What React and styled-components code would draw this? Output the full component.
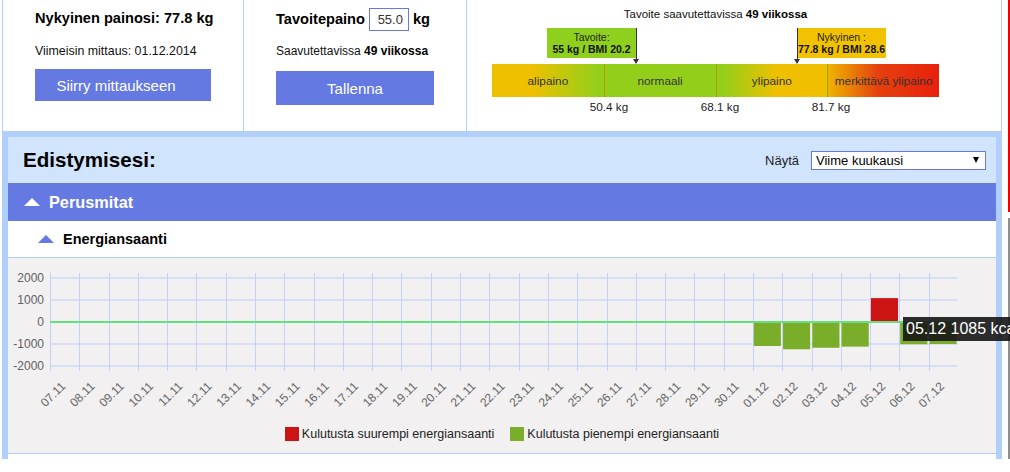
import React from "react";
import styled, { createGlobalStyle } from "styled-components";

const BLUE = "#6479e1";
const LINE = "#b0d0fb";

const GlobalStyle = createGlobalStyle`
  html, body { margin: 0; padding: 0; background: #fff; overflow: hidden; }
  body { font-family: "Liberation Sans", Arial, sans-serif; color: #000; }
  * { box-sizing: border-box; }
`;

const Page = styled.div`
  display: flex;
  align-items: flex-start;
  gap: 6px;
  padding-left: 2px;
  width: 1010px;
  height: 472px;
`;

const Main = styled.div`
  width: 1000px;
  display: flex;
  flex-direction: column;
`;

const Strip = styled.div`
  width: 2px;
  display: flex;
  flex-direction: column;
  gap: 6px;
`;

const StripPart = styled.div`
  height: ${(p) => p.$h}px;
  background: ${(p) => p.$c};
`;

/* ---------- top panels ---------- */
const TopRow = styled.div`
  display: flex;
  height: 131px;
  border-left: 1px solid ${LINE};
`;

const Panel = styled.section`
  width: ${(p) => p.$w}px;
  border-right: 1px solid ${LINE};
  padding: ${(p) => p.$pt}px 0 0 ${(p) => p.$pl}px;
  display: flex;
  flex-direction: column;
  align-items: flex-start;
`;

const BigTitle = styled.div`
  font-size: 14.6px;
  font-weight: bold;
  line-height: 17px;
`;

const Small = styled.div`
  font-size: ${(p) => p.$fs}px;
  line-height: 15px;
  color: #111;
  margin-top: ${(p) => p.$mt || 0}px;
  b { font-weight: bold; color: #000; }
`;

const Button = styled.button`
  width: ${(p) => p.$w}px;
  height: ${(p) => p.$h}px;
  margin-top: ${(p) => p.$mt}px;
  padding: 0 ${(p) => p.$pr || 0}px 0 0;
  background: ${BLUE};
  border: none;
  color: #fff;
  font-family: "Liberation Sans", Arial, sans-serif;
  font-size: 15px;
  cursor: pointer;
`;

const GoalRow = styled.div`
  display: flex;
  align-items: center;
  gap: 4px;
  height: 23px;
`;

const GoalInput = styled.input`
  width: 40px;
  height: 23px;
  border: 1px solid ${BLUE};
  text-align: right;
  padding: 0 5px 0 0;
  font-family: "Liberation Sans", Arial, sans-serif;
  font-size: 13px;
  color: #333;
  outline: none;
`;

const ScaleWrap = styled.div`
  width: 447px;
  display: flex;
  flex-direction: column;
`;

const ScaleTitle = styled.div`
  font-size: 11.5px;
  line-height: 15px;
  text-align: center;
  color: #111;
  b { color: #000; }
`;

const MarkerZone = styled.div`
  position: relative;
  height: 42px;
`;

const MarkerBox = styled.div`
  position: absolute;
  top: 6px;
  left: ${(p) => p.$left}px;
  width: 89px;
  height: 30px;
  background: ${(p) => p.$bg};
  display: flex;
  flex-direction: column;
  align-items: center;
  justify-content: center;
  font-size: 10.5px;
  line-height: 12px;
  color: #222;
  white-space: nowrap;
  b { color: #111; }
`;

const Pointer = styled.div`
  position: absolute;
  top: 6px;
  left: ${(p) => p.$x - 3}px;
  width: 7px;
  height: 36px;
  &::before {
    content: "";
    position: absolute;
    left: 3px;
    top: 0;
    bottom: 4px;
    width: 1px;
    background: #333;
  }
  &::after {
    content: "";
    position: absolute;
    left: 0;
    bottom: 0;
    border-left: 3.5px solid transparent;
    border-right: 3.5px solid transparent;
    border-top: 5px solid #333;
  }
`;

const Scale = styled.div`
  display: grid;
  grid-template-columns: repeat(4, 1fr);
  height: 33px;
`;

const Zone = styled.div`
  display: flex;
  align-items: center;
  justify-content: center;
  font-size: 11.8px;
  color: #333;
  background: ${(p) => p.$bg};
  & + & { border-left: 1px solid #a89f00; }
`;

const ScaleLabels = styled.div`
  position: relative;
  height: 20px;
  margin-top: 3px;
`;

const ScaleLabel = styled.span`
  position: absolute;
  top: 0;
  left: ${(p) => p.$x}px;
  transform: translateX(-50%);
  font-size: 11.7px;
  line-height: 14px;
  color: #222;
  white-space: nowrap;
`;

/* ---------- lower section ---------- */
const Lower = styled.div`
  background: ${LINE};
  padding: 6px 6px 0;
  height: 328px;
  display: flex;
  flex-direction: column;
`;

const Header = styled.div`
  height: 46px;
  background: #d0e4fd;
  display: flex;
  align-items: center;
  justify-content: space-between;
  padding: 0 10px 0 15px;
`;

const HeaderTitle = styled.h2`
  margin: 0;
  font-size: 20.6px;
  font-weight: bold;
  color: #000;
`;

const ShowWrap = styled.div`
  display: flex;
  align-items: center;
  gap: 12px;
  font-size: 13px;
  color: #222;
`;

const Select = styled.div`
  width: 175px;
  height: 19px;
  border: 1px solid ${BLUE};
  background: #fff;
  display: flex;
  align-items: center;
  justify-content: space-between;
  padding: 0 6px 0 4px;
  font-size: 13px;
  color: #000;
  &::after {
    content: "";
    border-left: 3.5px solid transparent;
    border-right: 3.5px solid transparent;
    border-top: 6px solid #000;
  }
`;

const SectionBar = styled.div`
  height: ${(p) => p.$h}px;
  background: ${(p) => (p.$main ? BLUE : "#fff")};
  display: flex;
  align-items: center;
  gap: 9px;
  padding-left: ${(p) => p.$pl}px;
  font-weight: bold;
  font-size: ${(p) => (p.$main ? 16.3 : 14.5)}px;
  color: ${(p) => (p.$main ? "#fff" : "#000")};
  border-bottom: ${(p) => (p.$main ? "none" : `1px solid ${LINE}`)};
`;

const UpTriangle = styled.span`
  width: 0;
  height: 0;
  border-left: 8px solid transparent;
  border-right: 8px solid transparent;
  border-bottom: 8px solid ${(p) => p.$c};
`;

const ChartArea = styled.div`
  position: relative;
  height: 196px;
  background: #f2f0f1;
  border-bottom: 1px solid ${LINE};
  display: flex;
  flex-direction: column;
`;

const Filler = styled.div`
  height: 5px;
  background: #fff;
`;

const Legend = styled.div`
  height: 24px;
  display: flex;
  align-items: center;
  justify-content: center;
  gap: 16px;
`;

const LegendItem = styled.div`
  display: flex;
  align-items: center;
  gap: 3px;
  font-size: 12.5px;
  color: #222;
  &::before {
    content: "";
    width: 14px;
    height: 14px;
    background: ${(p) => p.$c};
  }
`;

const Tooltip = styled.div`
  position: absolute;
  left: 895px;
  top: 59px;
  width: 140px;
  height: 24px;
  line-height: 24px;
  padding-left: 3px;
  background: rgba(22, 22, 22, 0.9);
  color: #fff;
  font-size: 16px;
  white-space: nowrap;
  z-index: 10;
`;

/* ---------- data ---------- */
const dates = [
  ...Array.from({ length: 24 }, (_, i) => `${String(i + 7).padStart(2, "0")}.11`),
  ...Array.from({ length: 7 }, (_, i) => `0${i + 1}.12`),
];
const values = { 24: -1090, 25: -1240, 26: -1170, 27: -1120, 28: 1085, 29: -1010, 30: -1000 };

const X0 = 42;
const X1 = 950;
const W = (X1 - X0) / 31;
const ZERO = 64;
const K = 0.022;

function Chart() {
  return (
    <svg width="988" height="164" style={{ display: "block" }}>
      {[20, 42, 64, 86, 108].map((y) => (
        <line key={y} x1={X0} x2={X1} y1={y} y2={y} stroke="#d6def8" strokeWidth="2" />
      ))}
      {dates.map((d, i) => {
        const x = Math.round(X0 + i * W) + 0.5;
        return <line key={d} x1={x} x2={x} y1={15} y2={113} stroke="#c6d1fb" strokeWidth="1" />;
      })}
      {Object.entries(values).map(([i, v]) => {
        const x = X0 + Number(i) * W + 0.8;
        const h = Math.abs(v) * K;
        return (
          <rect
            key={i}
            x={x}
            y={v > 0 ? ZERO - h : ZERO}
            width={W - 2.2}
            height={h}
            fill={v > 0 ? "#cc1414" : "#7aad29"}
          />
        );
      })}
      <line x1={X0} x2={X1} y1={ZERO} y2={ZERO} stroke="#66e07f" strokeWidth="2" />
      {[2000, 1000, 0, -1000, -2000].map((v, k) => (
        <text
          key={v}
          x={36}
          y={24 + k * 22}
          textAnchor="end"
          fontSize="12"
          fill="#606060"
          fontFamily="Liberation Sans, Arial, sans-serif"
        >
          {v}
        </text>
      ))}
      {dates.map((d, i) => {
        const cx = X0 + (i + 0.5) * W + 1.5;
        return (
          <text
            key={d}
            x={cx}
            y={129}
            transform={`rotate(-45 ${cx} 129)`}
            textAnchor="end"
            fontSize="12"
            fill="#666"
            fontFamily="Liberation Sans, Arial, sans-serif"
          >
            {d}
          </text>
        );
      })}
    </svg>
  );
}

export default function App() {
  return (
    <>
      <GlobalStyle />
      <Page>
        <Main>
          <TopRow>
            <Panel $w={241} $pt={10} $pl={32}>
              <BigTitle>Nykyinen painosi: 77.8 kg</BigTitle>
              <Small $fs={12.4} $mt={17}>Viimeisin mittaus: 01.12.2014</Small>
              <Button $w={176} $h={32} $mt={10} $pr={14}>Siirry mittaukseen</Button>
            </Panel>
            <Panel $w={223} $pt={8} $pl={32}>
              <GoalRow>
                <BigTitle>Tavoitepaino</BigTitle>
                <GoalInput defaultValue="55.0" />
                <BigTitle>kg</BigTitle>
              </GoalRow>
              <Small $fs={12} $mt={13}>
                Saavutettavissa <b>49 viikossa</b>
              </Small>
              <Button $w={158} $h={34} $mt={12}>Tallenna</Button>
            </Panel>
            <Panel $w={535} $pt={7} $pl={25}>
              <ScaleWrap>
                <ScaleTitle>
                  Tavoite saavutettavissa <b>49 viikossa</b>
                </ScaleTitle>
                <MarkerZone>
                  <MarkerBox $left={55} $bg="#8fcf1d">
                    <span>Tavoite:</span>
                    <b>55 kg / BMI 20.2</b>
                  </MarkerBox>
                  <Pointer $x={144} />
                  <MarkerBox $left={305} $bg="#f2c200">
                    <span>Nykyinen :</span>
                    <b>77.8 kg / BMI 28.6</b>
                  </MarkerBox>
                  <Pointer $x={305} />
                </MarkerZone>
                <Scale>
                  <Zone $bg="linear-gradient(to right, #efc000 35%, #93cf1a 95%)">alipaino</Zone>
                  <Zone $bg="#93cf1a">normaali</Zone>
                  <Zone $bg="linear-gradient(to right, #93cf1a 5%, #f0c000 55%)">ylipaino</Zone>
                  <Zone $bg="linear-gradient(to right, #edb000 2%, #e6400f 45%, #e8200c)">
                    merkittävä ylipaino
                  </Zone>
                </Scale>
                <ScaleLabels>
                  <ScaleLabel $x={117}>50.4 kg</ScaleLabel>
                  <ScaleLabel $x={228}>68.1 kg</ScaleLabel>
                  <ScaleLabel $x={339}>81.7 kg</ScaleLabel>
                </ScaleLabels>
              </ScaleWrap>
            </Panel>
          </TopRow>
          <Lower>
            <Header>
              <HeaderTitle>Edistymisesi:</HeaderTitle>
              <ShowWrap>
                Näytä
                <Select>Viime kuukausi</Select>
              </ShowWrap>
            </Header>
            <SectionBar $main $h={38} $pl={16}>
              <UpTriangle $c="#fff" />
              Perusmitat
            </SectionBar>
            <SectionBar $h={37} $pl={30}>
              <UpTriangle $c={BLUE} />
              Energiansaanti
            </SectionBar>
            <ChartArea>
              <Chart />
              <Legend>
                <LegendItem $c="#cc1414">Kulutusta suurempi energiansaanti</LegendItem>
                <LegendItem $c="#7aad29">Kulutusta pienempi energiansaanti</LegendItem>
              </Legend>
              <Tooltip>05.12 1085 kcal</Tooltip>
            </ChartArea>
            <Filler />
          </Lower>
        </Main>
        <Strip>
          <StripPart $h={212} $c="#f00000" />
          <StripPart $h={241} $c="#8e8e8e" />
        </Strip>
      </Page>
    </>
  );
}
